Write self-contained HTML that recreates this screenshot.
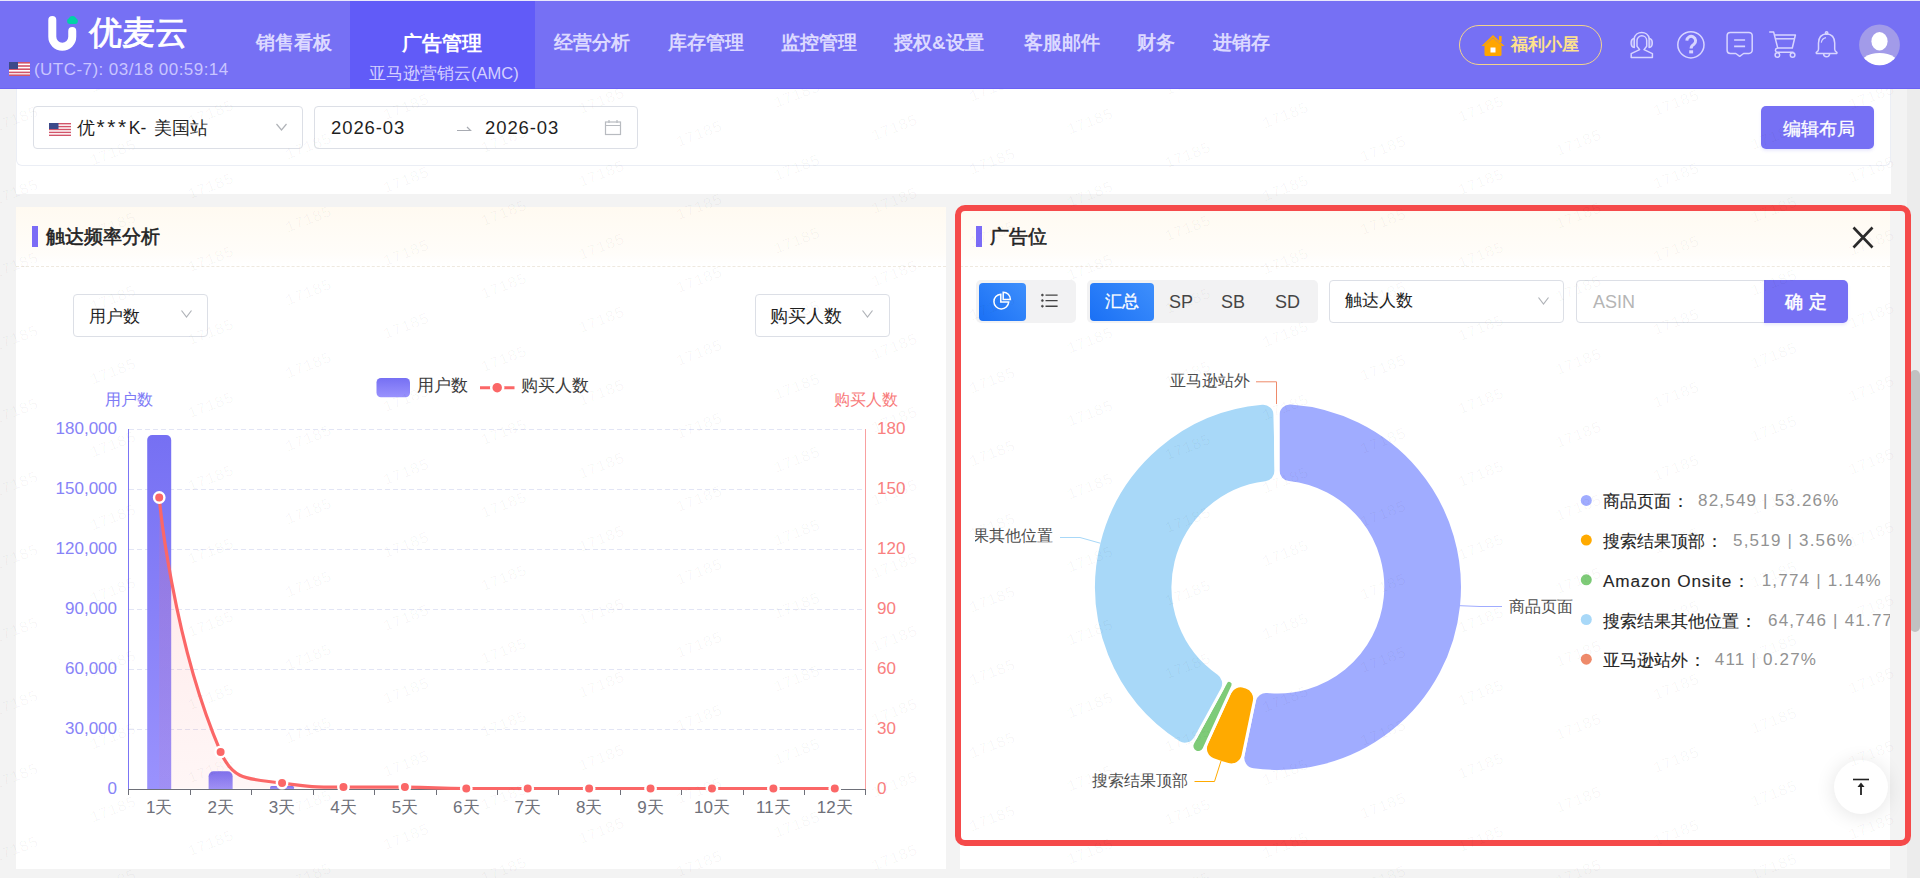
<!DOCTYPE html>
<html><head><meta charset="utf-8">
<style>
*{box-sizing:border-box;margin:0;padding:0}
html,body{width:1920px;height:878px;overflow:hidden;background:#f3f3f3;font-family:"Liberation Sans",sans-serif;color:#303133}
.a{position:absolute;white-space:nowrap}
#hdr{position:absolute;left:0;top:1px;width:1920px;height:88px;background:#7670f4;border-bottom:1px solid #6a62f4}
#topline{position:absolute;left:0;top:0;width:1920px;height:1px;background:#e9e8fb}
.nav{position:absolute;top:30px;font-size:18.8px;font-weight:bold;color:#dcd9ff;line-height:24px}
.ico{position:absolute}
</style></head><body>
<div id="topline"></div>
<div id="hdr">
  <!-- logo -->
  <svg class="ico" style="left:40px;top:8px" width="44" height="46" viewBox="40 8 44 46">
    <path d="M52.3 19 V35.8 A9.97 9.97 0 0 0 72.25 35.8 V30" fill="none" stroke="#fff" stroke-width="8" stroke-linecap="round"/>
    <circle cx="72.5" cy="18.6" r="3.6" fill="#00d2a6"/><rect x="67.1" y="17.2" width="10.8" height="5.8" rx="2.9" fill="#00d2a6"/>
  </svg>
  <div class="a" style="left:89px;top:12px;font-size:33px;color:#fff;-webkit-text-stroke:0.9px #fff;line-height:40px">优麦云</div>
  <svg class="ico" style="left:9px;top:61px" width="21" height="14" viewBox="0 0 21 14">
    <rect width="21" height="14" fill="#fff"/>
    <g fill="#d2556a"><rect y="0" width="21" height="1.6"/><rect y="3.2" width="21" height="1.6"/><rect y="6.4" width="21" height="1.6"/><rect y="9.6" width="21" height="1.6"/><rect y="12.4" width="21" height="1.6"/></g>
    <rect width="9" height="7" fill="#3c4a8a"/>
  </svg>
  <div class="a" style="left:34px;top:59px;font-size:17px;letter-spacing:0.45px;color:#c9c5ff;line-height:20px">(UTC-7): 03/18 00:59:14</div>

  <div class="nav" style="left:256px">销售看板</div>
  <div class="a" style="left:350px;top:0px;width:185px;height:88px;background:#615bf8"></div>
  <div class="a" style="left:402px;top:29px;font-size:20px;font-weight:bold;color:#fff;line-height:26px">广告管理</div>
  <div class="a" style="left:369px;top:62px;font-size:16.5px;color:#d4d0ff;line-height:20px">亚马逊营销云(AMC)</div>
  <div class="nav" style="left:554px">经营分析</div>
  <div class="nav" style="left:668px">库存管理</div>
  <div class="nav" style="left:781px">监控管理</div>
  <div class="nav" style="left:894px">授权&amp;设置</div>
  <div class="nav" style="left:1024px">客服邮件</div>
  <div class="nav" style="left:1137px">财务</div>
  <div class="nav" style="left:1213px">进销存</div>

  <!-- welfare pill -->
  <div class="a" style="left:1459px;top:24px;width:143px;height:40px;border:1.5px solid #f3d38c;border-radius:20px"></div>
  <svg class="ico" style="left:1480px;top:32px" width="26" height="24" viewBox="0 0 26 24">
    <path d="M13 2 L1.5 13 L4 13 L13 4.5 L22 13 L24.5 13 Z" fill="#ffa500"/>
    <rect x="19" y="3" width="2.6" height="6" fill="#ffa500"/>
    <path d="M4.5 12.5 L13 5 L21.5 12.5 V21.5 A1.5 1.5 0 0 1 20 23 H6 A1.5 1.5 0 0 1 4.5 21.5 Z" fill="#ffa500"/>
    <rect x="10.5" y="14.5" width="5" height="5" fill="#fff"/>
  </svg>
  <div class="a" style="left:1511px;top:31.5px;font-size:17px;font-weight:bold;color:#ffe28c;line-height:24px">福利小屋</div>

  <!-- icons -->
  <svg class="ico" style="left:1620px;top:19px" width="290" height="50" viewBox="1620 20 290 50" fill="none" stroke="#d8d5ff" stroke-width="1.5" stroke-linejoin="round">
    <path d="M1634.1 38.5 A7.8 7.8 0 0 1 1649.3 38.5"/>
    <path d="M1634.3 38.6 C1632 38.8 1631.1 41 1631.1 43 C1631.1 45.3 1632 47.3 1634.3 47.4 Z" fill="#d8d5ff" fill-opacity="0.35"/>
    <path d="M1649.1 38.6 C1651.4 38.8 1652.3 41 1652.3 43 C1652.3 45.3 1651.4 47.3 1649.1 47.4 Z" fill="#d8d5ff" fill-opacity="0.35"/>
    <path d="M1639.6 49.6 L1637 46.2 V40.6 A4.85 4.85 0 0 1 1646.7 40.6 V46.2 L1644 49.6 L1652.4 53.6 V57.4 H1631.2 V53.6 Z"/>
    <circle cx="1690.9" cy="44.8" r="13.1"/>
    <path d="M1686.8 40.6 A4.4 4.4 0 1 1 1693.9 44.2 C1692 45.3 1691.1 46.1 1691.1 48.6" stroke-width="3"/>
    <rect x="1689.2" y="50.3" width="3.9" height="3.1" fill="#d8d5ff" stroke="none"/>
    <path d="M1730.3 32.4 H1749 A3.2 3.2 0 0 1 1752.2 35.6 V50.3 A3.2 3.2 0 0 1 1749 53.5 H1743.6 L1739.7 56.3 L1735.8 53.5 H1730.3 A3.2 3.2 0 0 1 1727.1 50.3 V35.6 A3.2 3.2 0 0 1 1730.3 32.4 Z"/>
    <path d="M1734.1 40 H1745.1 M1734.1 46.3 H1745.1" stroke-width="1.7"/>
    <path d="M1769.2 31.9 H1773.6 L1777.7 47.9 Q1775.2 48.5 1775.4 50.5 Q1775.6 52.3 1777.6 52.3 H1793.5"/>
    <path d="M1774.5 35 H1795.4 L1792.3 48 H1777.6"/>
    <path d="M1775.3 38.8 H1794.5"/>
    <circle cx="1777.4" cy="55" r="2.3"/><circle cx="1792.6" cy="55" r="2.3"/>
    <path d="M1826.6 33.8 C1820.6 34.3 1818.6 38.5 1818.5 43 V49.3 C1818.5 50.8 1817.6 51.6 1816.6 52.2 C1815.8 52.7 1816.3 53.6 1817.2 53.6 H1836 C1836.9 53.6 1837.4 52.7 1836.6 52.2 C1835.6 51.6 1834.7 50.8 1834.7 49.3 V43 C1834.6 38.5 1832.6 34.3 1826.6 33.8 Z"/>
    <circle cx="1826.6" cy="33" r="1.2"/>
    <path d="M1823.6 53.8 A3 3 0 0 0 1829.6 53.8"/>
    <path d="M1821.3 42.6 A5.8 5.8 0 0 1 1826 37.6" stroke-width="1.2"/>
  </svg>
  <svg class="ico" style="left:1858px;top:23px" width="43" height="43" viewBox="1858 23 43 43">
    <defs><clipPath id="avc"><circle cx="1879.5" cy="43.9" r="20.4"/></clipPath></defs>
    <circle cx="1879.5" cy="43.9" r="20.4" fill="#a29be9"/>
    <g clip-path="url(#avc)">
      <ellipse cx="1879.5" cy="40.3" rx="8.1" ry="9.2" fill="#fff"/>
      <ellipse cx="1879.5" cy="66.4" rx="21" ry="14.4" fill="#fff"/>
    </g>
  </svg>
</div>

<!-- top filter container -->
<div class="a" style="left:16px;top:89px;width:1875px;height:105px;background:#fff"></div>
<div class="a" style="left:16px;top:89px;width:1875px;height:77px;border:1px solid #ebeef5;border-top:none;border-radius:0 0 6px 6px;background:#fff"></div>
<div class="a" style="left:33px;top:106px;width:270px;height:43px;border:1px solid #dcdfe6;border-radius:4px;background:#fff"></div>
<svg class="ico" style="left:49px;top:123px" width="22" height="13" viewBox="0 0 22 13">
  <rect width="22" height="13" fill="#fff"/>
  <g fill="#d2556a"><rect y="0" width="22" height="1.4"/><rect y="2.9" width="22" height="1.4"/><rect y="5.8" width="22" height="1.4"/><rect y="8.7" width="22" height="1.4"/><rect y="11.6" width="22" height="1.4"/></g>
  <rect width="9.5" height="6" fill="#3c4a8a"/>
</svg>
<div class="a" style="left:77px;top:116px;font-size:17.5px;color:#1f1f1f;line-height:22px">优<span style="font-size:21px;letter-spacing:2.6px;margin-left:1.5px;position:relative;top:0px">***</span>K-<span style="letter-spacing:3px"> </span>美国站</div>
<svg class="ico" style="left:275px;top:122px" width="13" height="10" viewBox="0 0 13 10"><path d="M1.5 2 L6.5 8 L11.5 2" fill="none" stroke="#b0b3b8" stroke-width="1.2"/></svg>

<div class="a" style="left:314px;top:106px;width:324px;height:43px;border:1px solid #dcdfe6;border-radius:4px;background:#fff"></div>
<div class="a" style="left:331px;top:117px;font-size:18.5px;letter-spacing:0.9px;color:#1f1f1f;line-height:22px">2026-03</div>
<svg class="ico" style="left:456px;top:124px" width="16" height="8" viewBox="0 0 16 8"><path d="M1 6.5 H14.5 L11 3" fill="none" stroke="#a8abb2" stroke-width="1.2"/></svg>
<div class="a" style="left:485px;top:117px;font-size:18.5px;letter-spacing:0.9px;color:#1f1f1f;line-height:22px">2026-03</div>
<svg class="ico" style="left:604px;top:119px" width="18" height="17" viewBox="0 0 18 17" fill="none" stroke="#b8bbc0" stroke-width="1.2">
  <rect x="1.5" y="3" width="15" height="12.5"/><path d="M1.5 6.5 H16.5 M5 1 V4 M13 1 V4"/>
</svg>

<div class="a" style="left:1761px;top:106px;width:113px;height:43px;background:#7670f4;border-radius:5px;box-shadow:0 2px 3px rgba(118,112,244,0.15)"></div>
<div class="a" style="left:1783px;top:117.5px;font-size:17.5px;color:#fff;-webkit-text-stroke:0.3px #fff;line-height:22px">编辑布局</div>

<!-- LEFT PANEL -->
<div class="a" style="left:16px;top:207px;width:930px;height:662px;background:#fff"></div>
<div class="a" style="left:16px;top:207px;width:930px;height:59px;background:linear-gradient(#fffaf1,#fffdf9 80%,#fff)"></div>
<div class="a" style="left:16px;top:266px;width:930px;height:0;border-top:1px dashed #efe9df"></div>
<div class="a" style="left:32px;top:226px;width:6px;height:21px;background:#7b6cf6"></div>
<div class="a" style="left:46px;top:225px;font-size:18.7px;color:#222;-webkit-text-stroke:0.55px #222;line-height:24px">触达频率分析</div>

<div class="a" style="left:73px;top:294px;width:135px;height:43px;border:1px solid #dcdfe6;border-radius:4px;background:#fff"></div>
<div class="a" style="left:89px;top:305px;font-size:17.3px;color:#1f1f1f;line-height:22px">用户数</div>
<svg class="ico" style="left:180px;top:309px" width="13" height="10" viewBox="0 0 13 10"><path d="M1.5 1.5 L6.5 8 L11.5 1.5" fill="none" stroke="#b0b3b8" stroke-width="1.2"/></svg>

<div class="a" style="left:755px;top:294px;width:135px;height:43px;border:1px solid #dcdfe6;border-radius:4px;background:#fff"></div>
<div class="a" style="left:770px;top:305px;font-size:17.5px;color:#1f1f1f;line-height:22px">购买人数</div>
<svg class="ico" style="left:861px;top:309px" width="13" height="10" viewBox="0 0 13 10"><path d="M1.5 1.5 L6.5 8 L11.5 1.5" fill="none" stroke="#b0b3b8" stroke-width="1.2"/></svg>

<!-- CHART LEFT -->
<!--CL--><svg class="ico" style="left:16px;top:207px" width="930" height="662" viewBox="16 207 930 662">
<defs><linearGradient id="bg1" x1="0" y1="0" x2="0" y2="1"><stop offset="0" stop-color="#7670f3"/><stop offset="1" stop-color="#9a92fd"/></linearGradient><linearGradient id="ag1" x1="0" y1="0" x2="0" y2="1"><stop offset="0" stop-color="#ff6b6b" stop-opacity="0.16"/><stop offset="1" stop-color="#ff6b6b" stop-opacity="0.06"/></linearGradient><linearGradient id="lg1" x1="0" y1="0" x2="1" y2="1"><stop offset="0" stop-color="#7670f3"/><stop offset="1" stop-color="#9a92fd"/></linearGradient></defs>
<line x1="129" y1="429.5" x2="865" y2="429.5" stroke="#e2e5f5" stroke-width="1" stroke-dasharray="5 3"/>
<line x1="129" y1="489.5" x2="865" y2="489.5" stroke="#e2e5f5" stroke-width="1" stroke-dasharray="5 3"/>
<line x1="129" y1="549.5" x2="865" y2="549.5" stroke="#e2e5f5" stroke-width="1" stroke-dasharray="5 3"/>
<line x1="129" y1="609.5" x2="865" y2="609.5" stroke="#e2e5f5" stroke-width="1" stroke-dasharray="5 3"/>
<line x1="129" y1="669.5" x2="865" y2="669.5" stroke="#e2e5f5" stroke-width="1" stroke-dasharray="5 3"/>
<line x1="129" y1="729.5" x2="865" y2="729.5" stroke="#e2e5f5" stroke-width="1" stroke-dasharray="5 3"/>
<path d="M147.21 789.00 V440.00 A5.00 5.00 0 0 1 152.21 435.00 H166.21 A5.00 5.00 0 0 1 171.21 440.00 V789.00 Z" fill="url(#bg1)"/>
<path d="M208.62 789.00 V776.30 A5.00 5.00 0 0 1 213.62 771.30 H227.62 A5.00 5.00 0 0 1 232.62 776.30 V789.00 Z" fill="url(#bg1)"/>
<path d="M270.04 789.00 V787.50 A1.50 1.50 0 0 1 271.54 786.00 H292.54 A1.50 1.50 0 0 1 294.04 787.50 V789.00 Z" fill="url(#bg1)"/>
<path d="M159.21 497.50 C159.21 497.50 172.01 638.86 220.62 751.90 C233.42 781.66 249.61 778.62 282.04 783.10 C311.02 787.10 312.72 787.10 343.46 787.10 C374.13 787.10 374.17 787.10 404.88 787.10 C435.59 787.10 435.58 788.50 466.29 788.50 C497.00 788.50 497.00 788.50 527.71 788.50 C558.42 788.50 558.42 788.50 589.12 788.50 C619.83 788.50 619.83 788.50 650.54 788.50 C681.25 788.50 681.25 788.50 711.96 788.50 C742.67 788.50 742.67 788.50 773.38 788.50 C804.08 788.50 834.79 788.50 834.79 788.50 L834.79 788.50 L159.21 788.50 Z" fill="url(#ag1)"/>
<line x1="128.5" y1="429" x2="128.5" y2="789" stroke="#7b75f5" stroke-width="1"/>
<line x1="865.5" y1="429" x2="865.5" y2="789" stroke="#f8a0a0" stroke-width="1"/>
<line x1="128" y1="789.5" x2="866" y2="789.5" stroke="#6e7079" stroke-width="1"/>
<line x1="128.5" y1="789" x2="128.5" y2="795" stroke="#6e7079" stroke-width="1"/>
<line x1="190.5" y1="789" x2="190.5" y2="795" stroke="#6e7079" stroke-width="1"/>
<line x1="251.5" y1="789" x2="251.5" y2="795" stroke="#6e7079" stroke-width="1"/>
<line x1="313.5" y1="789" x2="313.5" y2="795" stroke="#6e7079" stroke-width="1"/>
<line x1="374.5" y1="789" x2="374.5" y2="795" stroke="#6e7079" stroke-width="1"/>
<line x1="436.5" y1="789" x2="436.5" y2="795" stroke="#6e7079" stroke-width="1"/>
<line x1="497.5" y1="789" x2="497.5" y2="795" stroke="#6e7079" stroke-width="1"/>
<line x1="558.5" y1="789" x2="558.5" y2="795" stroke="#6e7079" stroke-width="1"/>
<line x1="620.5" y1="789" x2="620.5" y2="795" stroke="#6e7079" stroke-width="1"/>
<line x1="681.5" y1="789" x2="681.5" y2="795" stroke="#6e7079" stroke-width="1"/>
<line x1="743.5" y1="789" x2="743.5" y2="795" stroke="#6e7079" stroke-width="1"/>
<line x1="804.5" y1="789" x2="804.5" y2="795" stroke="#6e7079" stroke-width="1"/>
<line x1="865.5" y1="789" x2="865.5" y2="795" stroke="#6e7079" stroke-width="1"/>
<path d="M159.21 497.50 C159.21 497.50 172.01 638.86 220.62 751.90 C233.42 781.66 249.61 778.62 282.04 783.10 C311.02 787.10 312.72 787.10 343.46 787.10 C374.13 787.10 374.17 787.10 404.88 787.10 C435.59 787.10 435.58 788.50 466.29 788.50 C497.00 788.50 497.00 788.50 527.71 788.50 C558.42 788.50 558.42 788.50 589.12 788.50 C619.83 788.50 619.83 788.50 650.54 788.50 C681.25 788.50 681.25 788.50 711.96 788.50 C742.67 788.50 742.67 788.50 773.38 788.50 C804.08 788.50 834.79 788.50 834.79 788.50" fill="none" stroke="#fb6767" stroke-width="3.2"/>
<circle cx="159.21" cy="497.50" r="5.2" fill="#fb6767" stroke="#fff" stroke-width="2.4"/>
<circle cx="220.62" cy="751.90" r="5.2" fill="#fb6767" stroke="#fff" stroke-width="2.4"/>
<circle cx="282.04" cy="783.10" r="5.2" fill="#fb6767" stroke="#fff" stroke-width="2.4"/>
<circle cx="343.46" cy="787.10" r="5.2" fill="#fb6767" stroke="#fff" stroke-width="2.4"/>
<circle cx="404.88" cy="787.10" r="5.2" fill="#fb6767" stroke="#fff" stroke-width="2.4"/>
<circle cx="466.29" cy="788.50" r="5.2" fill="#fb6767" stroke="#fff" stroke-width="2.4"/>
<circle cx="527.71" cy="788.50" r="5.2" fill="#fb6767" stroke="#fff" stroke-width="2.4"/>
<circle cx="589.12" cy="788.50" r="5.2" fill="#fb6767" stroke="#fff" stroke-width="2.4"/>
<circle cx="650.54" cy="788.50" r="5.2" fill="#fb6767" stroke="#fff" stroke-width="2.4"/>
<circle cx="711.96" cy="788.50" r="5.2" fill="#fb6767" stroke="#fff" stroke-width="2.4"/>
<circle cx="773.38" cy="788.50" r="5.2" fill="#fb6767" stroke="#fff" stroke-width="2.4"/>
<circle cx="834.79" cy="788.50" r="5.2" fill="#fb6767" stroke="#fff" stroke-width="2.4"/>
<text x="117" y="433.5" text-anchor="end" font-size="17" fill="#8783f7">180,000</text>
<text x="877" y="433.5" font-size="17" fill="#f98080">180</text>
<text x="117" y="493.5" text-anchor="end" font-size="17" fill="#8783f7">150,000</text>
<text x="877" y="493.5" font-size="17" fill="#f98080">150</text>
<text x="117" y="553.5" text-anchor="end" font-size="17" fill="#8783f7">120,000</text>
<text x="877" y="553.5" font-size="17" fill="#f98080">120</text>
<text x="117" y="613.5" text-anchor="end" font-size="17" fill="#8783f7">90,000</text>
<text x="877" y="613.5" font-size="17" fill="#f98080">90</text>
<text x="117" y="673.5" text-anchor="end" font-size="17" fill="#8783f7">60,000</text>
<text x="877" y="673.5" font-size="17" fill="#f98080">60</text>
<text x="117" y="733.5" text-anchor="end" font-size="17" fill="#8783f7">30,000</text>
<text x="877" y="733.5" font-size="17" fill="#f98080">30</text>
<text x="117" y="793.5" text-anchor="end" font-size="17" fill="#8783f7">0</text>
<text x="877" y="793.5" font-size="17" fill="#f98080">0</text>
<text x="159.21" y="812.5" text-anchor="middle" font-size="17" fill="#6e7079">1天</text>
<text x="220.62" y="812.5" text-anchor="middle" font-size="17" fill="#6e7079">2天</text>
<text x="282.04" y="812.5" text-anchor="middle" font-size="17" fill="#6e7079">3天</text>
<text x="343.46" y="812.5" text-anchor="middle" font-size="17" fill="#6e7079">4天</text>
<text x="404.88" y="812.5" text-anchor="middle" font-size="17" fill="#6e7079">5天</text>
<text x="466.29" y="812.5" text-anchor="middle" font-size="17" fill="#6e7079">6天</text>
<text x="527.71" y="812.5" text-anchor="middle" font-size="17" fill="#6e7079">7天</text>
<text x="589.12" y="812.5" text-anchor="middle" font-size="17" fill="#6e7079">8天</text>
<text x="650.54" y="812.5" text-anchor="middle" font-size="17" fill="#6e7079">9天</text>
<text x="711.96" y="812.5" text-anchor="middle" font-size="17" fill="#6e7079">10天</text>
<text x="773.38" y="812.5" text-anchor="middle" font-size="17" fill="#6e7079">11天</text>
<text x="834.79" y="812.5" text-anchor="middle" font-size="17" fill="#6e7079">12天</text>
<text x="129" y="405" text-anchor="middle" font-size="16" fill="#7d7af6">用户数</text>
<text x="866" y="405" text-anchor="middle" font-size="16" fill="#f87a7a">购买人数</text>
<rect x="376.5" y="378" width="33.5" height="19.3" rx="4.5" fill="url(#bg1)"/>
<text x="417" y="391" font-size="16.5" fill="#3c3c3c">用户数</text>
<line x1="480" y1="387.7" x2="514.5" y2="387.7" stroke="#fb6767" stroke-width="3"/>
<circle cx="497.2" cy="387.7" r="6" fill="#fb6767" stroke="#fff" stroke-width="2.5"/>
<text x="521" y="391" font-size="16.5" fill="#3c3c3c">购买人数</text>
</svg><!--/CL-->

<!-- RIGHT PANEL -->
<div class="a" style="left:960px;top:207px;width:930px;height:662px;background:#fff"></div>
<div class="a" style="left:960px;top:207px;width:930px;height:59px;background:linear-gradient(#fffaf1,#fffdf9 80%,#fff)"></div>
<div class="a" style="left:960px;top:266px;width:930px;height:0;border-top:1px dashed #efe9df"></div>
<div class="a" style="left:976px;top:226px;width:6px;height:21px;background:#7b6cf6"></div>
<div class="a" style="left:990px;top:225px;font-size:18.7px;color:#222;-webkit-text-stroke:0.55px #222;line-height:24px">广告位</div>

<!--CR--><svg class="ico" style="left:975px;top:330px" width="915" height="520" viewBox="975 330 915 520">
<path d="M1278.00 470.62 L1278.00 415.02 A12.00 12.00 0 0 1 1290.84 403.05 A184.40 184.40 0 1 1 1253.18 769.72 A12.00 12.00 0 0 1 1243.04 755.39 L1254.34 700.95 A12.00 12.00 0 0 1 1267.31 691.45 A105.00 105.00 0 0 0 1288.77 482.55 A12.00 12.00 0 0 1 1278.00 470.62 Z" fill="#a0acff" stroke="#fff" stroke-width="3"/>
<path d="M1254.34 700.95 L1243.04 755.39 A12.00 12.00 0 0 1 1228.04 764.50 A184.40 184.40 0 0 1 1213.26 759.66 A12.00 12.00 0 0 1 1206.55 743.44 L1229.65 692.86 A12.00 12.00 0 0 1 1244.41 686.48 A105.00 105.00 0 0 0 1246.23 687.08 A12.00 12.00 0 0 1 1254.34 700.95 Z" fill="#ffaa00" stroke="#fff" stroke-width="3"/>
<path d="M1232.78 686.01 L1204.10 748.81 A6.40 6.40 0 0 1 1195.41 751.87 A184.40 184.40 0 0 1 1195.41 751.87 A6.40 6.40 0 0 1 1192.67 743.08 L1225.79 682.50 A3.92 3.92 0 0 1 1230.97 680.88 A105.00 105.00 0 0 0 1230.97 680.88 A3.92 3.92 0 0 1 1232.78 686.01 Z" fill="#7ecb78" stroke="#fff" stroke-width="3"/>
<path d="M1222.17 689.12 L1195.50 737.90 A12.00 12.00 0 0 1 1178.49 742.25 A184.40 184.40 0 0 1 1262.10 403.29 A12.00 12.00 0 0 1 1275.13 415.04 L1276.06 470.63 A12.00 12.00 0 0 1 1265.49 482.75 A105.00 105.00 0 0 0 1218.45 673.48 A12.00 12.00 0 0 1 1222.17 689.12 Z" fill="#a8d8f8" stroke="#fff" stroke-width="3"/>
<path d="M1276.24 481.14 L1274.95 404.16 A1.52 1.52 0 0 1 1276.46 402.61 A184.40 184.40 0 0 1 1276.46 402.61 A1.52 1.52 0 0 1 1278.00 404.13 L1278.00 481.12 A0.88 0.88 0 0 1 1277.13 482.00 A105.00 105.00 0 0 0 1277.13 482.00 A0.88 0.88 0 0 1 1276.24 481.14 Z" fill="#ee8a6a" stroke="#fff" stroke-width="3"/>
<polyline points="1460,605.7 1480,606.5 1502,606.5" fill="none" stroke="#a0acff" stroke-width="1"/>
<polyline points="1221,761 1214.5,781.5 1194.5,781.5" fill="none" stroke="#ffaa00" stroke-width="1"/>
<polyline points="1100.3,543.2 1080,537.5 1060,537.5" fill="none" stroke="#a8d8f8" stroke-width="1"/>
<polyline points="1276.5,404 1276.5,381.8 1256,381.8" fill="none" stroke="#ee8a6a" stroke-width="1"/>
<text x="1509" y="611.5" font-size="16" fill="#4e4e4e">商品页面</text>
<text x="1188" y="785.5" text-anchor="end" font-size="16" fill="#4e4e4e">搜索结果顶部</text>
<text x="1052.5" y="541" text-anchor="end" font-size="16" fill="#4e4e4e">搜索结果其他位置</text>
<text x="1249.5" y="385.5" text-anchor="end" font-size="16" fill="#4e4e4e">亚马逊站外</text>
<circle cx="1586.3" cy="500.4" r="5.5" fill="#a0acff"/>
<text x="1603" y="507.4" font-size="17.2" fill="#262626" stroke="#262626" stroke-width="0.12">商品页面<tspan dx="0.5">：</tspan></text>
<text x="1698.0" y="506.4" font-size="17" fill="#929292" letter-spacing="1.2">82,549 | 53.26%</text>
<circle cx="1586.3" cy="540.1" r="5.5" fill="#ffaa00"/>
<text x="1603" y="547.1" font-size="17.2" fill="#262626" stroke="#262626" stroke-width="0.12">搜索结果顶部<tspan dx="0.5">：</tspan></text>
<text x="1733.0" y="546.1" font-size="17" fill="#929292" letter-spacing="1.2">5,519 | 3.56%</text>
<circle cx="1586.3" cy="579.8" r="5.5" fill="#7ecb78"/>
<text x="1603" y="586.8" font-size="17.2" fill="#262626" stroke="#262626" stroke-width="0.12" letter-spacing="0.9">Amazon Onsite<tspan dx="0.5">：</tspan></text>
<text x="1761.7" y="585.8" font-size="17" fill="#929292" letter-spacing="1.2">1,774 | 1.14%</text>
<circle cx="1586.3" cy="619.5" r="5.5" fill="#a8d8f8"/>
<text x="1603" y="626.5" font-size="17.2" fill="#262626" stroke="#262626" stroke-width="0.12">搜索结果其他位置<tspan dx="0.5">：</tspan></text>
<text x="1768.0" y="625.5" font-size="17" fill="#929292" letter-spacing="1.2">64,746 | 41.77%</text>
<circle cx="1586.3" cy="659.2" r="5.5" fill="#ee8a6a"/>
<text x="1603" y="666.2" font-size="17.2" fill="#262626" stroke="#262626" stroke-width="0.12">亚马逊站外<tspan dx="0.5">：</tspan></text>
<text x="1714.8" y="665.2" font-size="17" fill="#929292" letter-spacing="1.2">411 | 0.27%</text>
</svg><!--/CR-->

<!-- right toolbar -->
<svg class="ico" style="left:1852px;top:226px" width="22" height="23" viewBox="0 0 22 23"><path d="M1.5 1.5 L20.5 21.5 M20.5 1.5 L1.5 21.5" stroke="#2b2b2b" stroke-width="2.6"/></svg>
<div class="a" style="left:976px;top:280px;width:100px;height:43px;background:#f2f2f3;border-radius:5px"></div>
<div class="a" style="left:979px;top:283px;width:47px;height:38px;background:linear-gradient(45deg,#1a70f5,#3e8ffc);border-radius:4px"></div>
<svg class="ico" style="left:985px;top:285px" width="30" height="30" viewBox="985 285 30 30" fill="none" stroke="#fff" stroke-width="1.5">
  <path d="M1000.8 294.2 A7.4 7.4 0 1 0 1008.7 302.1 H1000.8 Z"/><path d="M1003.2 292.2 A7.2 7.2 0 0 1 1010.4 299.4 H1003.2 Z"/>
</svg>
<svg class="ico" style="left:1035px;top:288px" width="30" height="24" viewBox="1035 288 30 24" fill="none" stroke="#444" stroke-width="1.4">
  <path d="M1045.5 295.1 H1057.6 M1045.5 300.6 H1057.6 M1045.5 306.2 H1057.6"/>
  <circle cx="1042.4" cy="295.1" r="1" fill="#444" stroke-width="0.6"/><circle cx="1042.4" cy="300.6" r="1" fill="#444" stroke-width="0.6"/><circle cx="1042.4" cy="306.2" r="1" fill="#444" stroke-width="0.6"/>
</svg>
<div class="a" style="left:1087px;top:280px;width:231px;height:43px;background:#f2f2f3;border-radius:5px"></div>
<div class="a" style="left:1090px;top:283px;width:64px;height:38px;background:linear-gradient(45deg,#1a70f5,#3e8ffc);border-radius:4px"></div>
<div class="a" style="left:1105px;top:290.5px;font-size:17px;color:#fff;-webkit-text-stroke:0.3px #fff;line-height:22px">汇总</div>
<div class="a" style="left:1169px;top:291px;font-size:18px;color:#454545;line-height:22px">SP</div>
<div class="a" style="left:1221px;top:291px;font-size:18px;color:#454545;line-height:22px">SB</div>
<div class="a" style="left:1275px;top:291px;font-size:18px;color:#454545;line-height:22px">SD</div>
<div class="a" style="left:1329px;top:280px;width:235px;height:43px;border:1px solid #dcdfe6;border-radius:4px;background:#fff"></div>
<div class="a" style="left:1345px;top:290px;font-size:17px;color:#1f1f1f;line-height:22px">触达人数</div>
<svg class="ico" style="left:1537px;top:296px" width="13" height="10" viewBox="0 0 13 10"><path d="M1.5 1.5 L6.5 8 L11.5 1.5" fill="none" stroke="#b0b3b8" stroke-width="1.2"/></svg>
<div class="a" style="left:1576px;top:280px;width:192px;height:43px;border:1px solid #dcdfe6;border-radius:4px 0 0 4px;background:#fff"></div>
<div class="a" style="left:1593px;top:291px;font-size:18px;color:#b5b5b5;line-height:22px">ASIN</div>
<div class="a" style="left:1764px;top:280px;width:84px;height:43px;background:#7670f4;border-radius:0 5px 5px 0;box-shadow:0 2px 3px rgba(118,112,244,0.15)"></div>
<div class="a" style="left:1785px;top:291px;font-size:17.5px;color:#fff;-webkit-text-stroke:0.5px #fff;line-height:22px;letter-spacing:6px">确定</div>

<!-- back to top -->
<div class="a" style="left:1834px;top:760px;width:54px;height:54px;border-radius:50%;background:#fff;box-shadow:0 2px 20px rgba(0,0,0,0.11)"></div>
<svg class="ico" style="left:1851px;top:777px" width="20" height="20" viewBox="0 0 20 20">
  <path d="M2 2.5 H18" stroke="#222" stroke-width="1.6"/><path d="M10 18 V8" stroke="#222" stroke-width="1.8"/><path d="M6.5 10 L10 5.5 L13.5 10 Z" fill="#222"/>
</svg>

<!-- scrollbar -->
<div class="a" style="left:1907px;top:89px;width:13px;height:789px;background:#ececec"></div>
<div class="a" style="left:1910px;top:370px;width:10px;height:262px;background:#c1c1c1;border-radius:5px"></div>

<!-- red highlight -->
<div class="a" style="left:955px;top:205px;width:956px;height:641px;border:6px solid #f54a4a;border-radius:10px"></div>









<!--WM--><svg class="ico" style="left:0;top:89px;pointer-events:none" width="1920" height="789" viewBox="0 89 1920 789"><g font-family="Liberation Mono" font-size="16" fill="#000" fill-opacity="0.035" text-anchor="middle" dominant-baseline="central"><text transform="translate(15.4 120.4) rotate(-21)">17185</text><text transform="translate(15.4 193.4) rotate(-21)">17185</text><text transform="translate(15.4 266.4) rotate(-21)">17185</text><text transform="translate(15.4 339.4) rotate(-21)">17185</text><text transform="translate(15.4 412.4) rotate(-21)">17185</text><text transform="translate(15.4 485.4) rotate(-21)">17185</text><text transform="translate(15.4 558.4) rotate(-21)">17185</text><text transform="translate(15.4 631.4) rotate(-21)">17185</text><text transform="translate(15.4 704.4) rotate(-21)">17185</text><text transform="translate(15.4 777.4) rotate(-21)">17185</text><text transform="translate(15.4 850.4) rotate(-21)">17185</text><text transform="translate(15.4 923.4) rotate(-21)">17185</text><text transform="translate(113.1 80.5) rotate(-21)">17185</text><text transform="translate(210.8 114.2) rotate(-21)">17185</text><text transform="translate(113.1 153.5) rotate(-21)">17185</text><text transform="translate(210.8 187.2) rotate(-21)">17185</text><text transform="translate(113.1 226.5) rotate(-21)">17185</text><text transform="translate(210.8 260.2) rotate(-21)">17185</text><text transform="translate(113.1 299.5) rotate(-21)">17185</text><text transform="translate(210.8 333.2) rotate(-21)">17185</text><text transform="translate(113.1 372.5) rotate(-21)">17185</text><text transform="translate(210.8 406.2) rotate(-21)">17185</text><text transform="translate(113.1 445.5) rotate(-21)">17185</text><text transform="translate(210.8 479.2) rotate(-21)">17185</text><text transform="translate(113.1 518.5) rotate(-21)">17185</text><text transform="translate(210.8 552.2) rotate(-21)">17185</text><text transform="translate(113.1 591.5) rotate(-21)">17185</text><text transform="translate(210.8 625.2) rotate(-21)">17185</text><text transform="translate(113.1 664.5) rotate(-21)">17185</text><text transform="translate(210.8 698.2) rotate(-21)">17185</text><text transform="translate(113.1 737.5) rotate(-21)">17185</text><text transform="translate(210.8 771.2) rotate(-21)">17185</text><text transform="translate(113.1 810.5) rotate(-21)">17185</text><text transform="translate(210.8 844.2) rotate(-21)">17185</text><text transform="translate(113.1 883.5) rotate(-21)">17185</text><text transform="translate(210.8 917.2) rotate(-21)">17185</text><text transform="translate(308.5 74.3) rotate(-21)">17185</text><text transform="translate(406.2 108.0) rotate(-21)">17185</text><text transform="translate(308.5 147.3) rotate(-21)">17185</text><text transform="translate(406.2 181.0) rotate(-21)">17185</text><text transform="translate(308.5 220.3) rotate(-21)">17185</text><text transform="translate(406.2 254.0) rotate(-21)">17185</text><text transform="translate(308.5 293.3) rotate(-21)">17185</text><text transform="translate(406.2 327.0) rotate(-21)">17185</text><text transform="translate(308.5 366.3) rotate(-21)">17185</text><text transform="translate(406.2 400.0) rotate(-21)">17185</text><text transform="translate(308.5 439.3) rotate(-21)">17185</text><text transform="translate(406.2 473.0) rotate(-21)">17185</text><text transform="translate(308.5 512.3) rotate(-21)">17185</text><text transform="translate(406.2 546.0) rotate(-21)">17185</text><text transform="translate(308.5 585.3) rotate(-21)">17185</text><text transform="translate(406.2 619.0) rotate(-21)">17185</text><text transform="translate(308.5 658.3) rotate(-21)">17185</text><text transform="translate(406.2 692.0) rotate(-21)">17185</text><text transform="translate(308.5 731.3) rotate(-21)">17185</text><text transform="translate(406.2 765.0) rotate(-21)">17185</text><text transform="translate(308.5 804.3) rotate(-21)">17185</text><text transform="translate(406.2 838.0) rotate(-21)">17185</text><text transform="translate(308.5 877.3) rotate(-21)">17185</text><text transform="translate(406.2 911.0) rotate(-21)">17185</text><text transform="translate(503.9 68.1) rotate(-21)">17185</text><text transform="translate(601.6 101.8) rotate(-21)">17185</text><text transform="translate(503.9 141.1) rotate(-21)">17185</text><text transform="translate(601.6 174.8) rotate(-21)">17185</text><text transform="translate(503.9 214.1) rotate(-21)">17185</text><text transform="translate(601.6 247.8) rotate(-21)">17185</text><text transform="translate(503.9 287.1) rotate(-21)">17185</text><text transform="translate(601.6 320.8) rotate(-21)">17185</text><text transform="translate(503.9 360.1) rotate(-21)">17185</text><text transform="translate(601.6 393.8) rotate(-21)">17185</text><text transform="translate(503.9 433.1) rotate(-21)">17185</text><text transform="translate(601.6 466.8) rotate(-21)">17185</text><text transform="translate(503.9 506.1) rotate(-21)">17185</text><text transform="translate(601.6 539.8) rotate(-21)">17185</text><text transform="translate(503.9 579.1) rotate(-21)">17185</text><text transform="translate(601.6 612.8) rotate(-21)">17185</text><text transform="translate(503.9 652.1) rotate(-21)">17185</text><text transform="translate(601.6 685.8) rotate(-21)">17185</text><text transform="translate(503.9 725.1) rotate(-21)">17185</text><text transform="translate(601.6 758.8) rotate(-21)">17185</text><text transform="translate(503.9 798.1) rotate(-21)">17185</text><text transform="translate(601.6 831.8) rotate(-21)">17185</text><text transform="translate(503.9 871.1) rotate(-21)">17185</text><text transform="translate(601.6 904.8) rotate(-21)">17185</text><text transform="translate(699.3 61.9) rotate(-21)">17185</text><text transform="translate(797.0 95.6) rotate(-21)">17185</text><text transform="translate(699.3 134.9) rotate(-21)">17185</text><text transform="translate(797.0 168.6) rotate(-21)">17185</text><text transform="translate(699.3 207.9) rotate(-21)">17185</text><text transform="translate(797.0 241.6) rotate(-21)">17185</text><text transform="translate(699.3 280.9) rotate(-21)">17185</text><text transform="translate(797.0 314.6) rotate(-21)">17185</text><text transform="translate(699.3 353.9) rotate(-21)">17185</text><text transform="translate(797.0 387.6) rotate(-21)">17185</text><text transform="translate(699.3 426.9) rotate(-21)">17185</text><text transform="translate(797.0 460.6) rotate(-21)">17185</text><text transform="translate(699.3 499.9) rotate(-21)">17185</text><text transform="translate(797.0 533.6) rotate(-21)">17185</text><text transform="translate(699.3 572.9) rotate(-21)">17185</text><text transform="translate(797.0 606.6) rotate(-21)">17185</text><text transform="translate(699.3 645.9) rotate(-21)">17185</text><text transform="translate(797.0 679.6) rotate(-21)">17185</text><text transform="translate(699.3 718.9) rotate(-21)">17185</text><text transform="translate(797.0 752.6) rotate(-21)">17185</text><text transform="translate(699.3 791.9) rotate(-21)">17185</text><text transform="translate(797.0 825.6) rotate(-21)">17185</text><text transform="translate(699.3 864.9) rotate(-21)">17185</text><text transform="translate(797.0 898.6) rotate(-21)">17185</text><text transform="translate(992.4 89.4) rotate(-21)">17185</text><text transform="translate(894.7 128.7) rotate(-21)">17185</text><text transform="translate(992.4 162.4) rotate(-21)">17185</text><text transform="translate(894.7 201.7) rotate(-21)">17185</text><text transform="translate(992.4 235.4) rotate(-21)">17185</text><text transform="translate(894.7 274.7) rotate(-21)">17185</text><text transform="translate(992.4 308.4) rotate(-21)">17185</text><text transform="translate(894.7 347.7) rotate(-21)">17185</text><text transform="translate(992.4 381.4) rotate(-21)">17185</text><text transform="translate(894.7 420.7) rotate(-21)">17185</text><text transform="translate(992.4 454.4) rotate(-21)">17185</text><text transform="translate(894.7 493.7) rotate(-21)">17185</text><text transform="translate(992.4 527.4) rotate(-21)">17185</text><text transform="translate(894.7 566.7) rotate(-21)">17185</text><text transform="translate(992.4 600.4) rotate(-21)">17185</text><text transform="translate(894.7 639.7) rotate(-21)">17185</text><text transform="translate(992.4 673.4) rotate(-21)">17185</text><text transform="translate(894.7 712.7) rotate(-21)">17185</text><text transform="translate(992.4 746.4) rotate(-21)">17185</text><text transform="translate(894.7 785.7) rotate(-21)">17185</text><text transform="translate(992.4 819.4) rotate(-21)">17185</text><text transform="translate(894.7 858.7) rotate(-21)">17185</text><text transform="translate(992.4 892.4) rotate(-21)">17185</text><text transform="translate(1187.8 83.2) rotate(-21)">17185</text><text transform="translate(1090.1 122.5) rotate(-21)">17185</text><text transform="translate(1187.8 156.2) rotate(-21)">17185</text><text transform="translate(1090.1 195.5) rotate(-21)">17185</text><text transform="translate(1187.8 229.2) rotate(-21)">17185</text><text transform="translate(1090.1 268.5) rotate(-21)">17185</text><text transform="translate(1187.8 302.2) rotate(-21)">17185</text><text transform="translate(1090.1 341.5) rotate(-21)">17185</text><text transform="translate(1187.8 375.2) rotate(-21)">17185</text><text transform="translate(1090.1 414.5) rotate(-21)">17185</text><text transform="translate(1187.8 448.2) rotate(-21)">17185</text><text transform="translate(1090.1 487.5) rotate(-21)">17185</text><text transform="translate(1187.8 521.2) rotate(-21)">17185</text><text transform="translate(1090.1 560.5) rotate(-21)">17185</text><text transform="translate(1187.8 594.2) rotate(-21)">17185</text><text transform="translate(1090.1 633.5) rotate(-21)">17185</text><text transform="translate(1187.8 667.2) rotate(-21)">17185</text><text transform="translate(1090.1 706.5) rotate(-21)">17185</text><text transform="translate(1187.8 740.2) rotate(-21)">17185</text><text transform="translate(1090.1 779.5) rotate(-21)">17185</text><text transform="translate(1187.8 813.2) rotate(-21)">17185</text><text transform="translate(1090.1 852.5) rotate(-21)">17185</text><text transform="translate(1187.8 886.2) rotate(-21)">17185</text><text transform="translate(1090.1 925.5) rotate(-21)">17185</text><text transform="translate(1383.2 77.0) rotate(-21)">17185</text><text transform="translate(1285.5 116.3) rotate(-21)">17185</text><text transform="translate(1383.2 150.0) rotate(-21)">17185</text><text transform="translate(1285.5 189.3) rotate(-21)">17185</text><text transform="translate(1383.2 223.0) rotate(-21)">17185</text><text transform="translate(1285.5 262.3) rotate(-21)">17185</text><text transform="translate(1383.2 296.0) rotate(-21)">17185</text><text transform="translate(1285.5 335.3) rotate(-21)">17185</text><text transform="translate(1383.2 369.0) rotate(-21)">17185</text><text transform="translate(1285.5 408.3) rotate(-21)">17185</text><text transform="translate(1383.2 442.0) rotate(-21)">17185</text><text transform="translate(1285.5 481.3) rotate(-21)">17185</text><text transform="translate(1383.2 515.0) rotate(-21)">17185</text><text transform="translate(1285.5 554.3) rotate(-21)">17185</text><text transform="translate(1383.2 588.0) rotate(-21)">17185</text><text transform="translate(1285.5 627.3) rotate(-21)">17185</text><text transform="translate(1383.2 661.0) rotate(-21)">17185</text><text transform="translate(1285.5 700.3) rotate(-21)">17185</text><text transform="translate(1383.2 734.0) rotate(-21)">17185</text><text transform="translate(1285.5 773.3) rotate(-21)">17185</text><text transform="translate(1383.2 807.0) rotate(-21)">17185</text><text transform="translate(1285.5 846.3) rotate(-21)">17185</text><text transform="translate(1383.2 880.0) rotate(-21)">17185</text><text transform="translate(1285.5 919.3) rotate(-21)">17185</text><text transform="translate(1578.6 70.8) rotate(-21)">17185</text><text transform="translate(1480.9 110.1) rotate(-21)">17185</text><text transform="translate(1578.6 143.8) rotate(-21)">17185</text><text transform="translate(1480.9 183.1) rotate(-21)">17185</text><text transform="translate(1578.6 216.8) rotate(-21)">17185</text><text transform="translate(1480.9 256.1) rotate(-21)">17185</text><text transform="translate(1578.6 289.8) rotate(-21)">17185</text><text transform="translate(1480.9 329.1) rotate(-21)">17185</text><text transform="translate(1578.6 362.8) rotate(-21)">17185</text><text transform="translate(1480.9 402.1) rotate(-21)">17185</text><text transform="translate(1578.6 435.8) rotate(-21)">17185</text><text transform="translate(1480.9 475.1) rotate(-21)">17185</text><text transform="translate(1578.6 508.8) rotate(-21)">17185</text><text transform="translate(1480.9 548.1) rotate(-21)">17185</text><text transform="translate(1578.6 581.8) rotate(-21)">17185</text><text transform="translate(1480.9 621.1) rotate(-21)">17185</text><text transform="translate(1578.6 654.8) rotate(-21)">17185</text><text transform="translate(1480.9 694.1) rotate(-21)">17185</text><text transform="translate(1578.6 727.8) rotate(-21)">17185</text><text transform="translate(1480.9 767.1) rotate(-21)">17185</text><text transform="translate(1578.6 800.8) rotate(-21)">17185</text><text transform="translate(1480.9 840.1) rotate(-21)">17185</text><text transform="translate(1578.6 873.8) rotate(-21)">17185</text><text transform="translate(1480.9 913.1) rotate(-21)">17185</text><text transform="translate(1774.0 64.6) rotate(-21)">17185</text><text transform="translate(1676.3 103.9) rotate(-21)">17185</text><text transform="translate(1774.0 137.6) rotate(-21)">17185</text><text transform="translate(1676.3 176.9) rotate(-21)">17185</text><text transform="translate(1774.0 210.6) rotate(-21)">17185</text><text transform="translate(1676.3 249.9) rotate(-21)">17185</text><text transform="translate(1774.0 283.6) rotate(-21)">17185</text><text transform="translate(1676.3 322.9) rotate(-21)">17185</text><text transform="translate(1774.0 356.6) rotate(-21)">17185</text><text transform="translate(1676.3 395.9) rotate(-21)">17185</text><text transform="translate(1774.0 429.6) rotate(-21)">17185</text><text transform="translate(1676.3 468.9) rotate(-21)">17185</text><text transform="translate(1774.0 502.6) rotate(-21)">17185</text><text transform="translate(1676.3 541.9) rotate(-21)">17185</text><text transform="translate(1774.0 575.6) rotate(-21)">17185</text><text transform="translate(1676.3 614.9) rotate(-21)">17185</text><text transform="translate(1774.0 648.6) rotate(-21)">17185</text><text transform="translate(1676.3 687.9) rotate(-21)">17185</text><text transform="translate(1774.0 721.6) rotate(-21)">17185</text><text transform="translate(1676.3 760.9) rotate(-21)">17185</text><text transform="translate(1774.0 794.6) rotate(-21)">17185</text><text transform="translate(1676.3 833.9) rotate(-21)">17185</text><text transform="translate(1774.0 867.6) rotate(-21)">17185</text><text transform="translate(1676.3 906.9) rotate(-21)">17185</text><text transform="translate(1871.7 97.7) rotate(-21)">17185</text><text transform="translate(1969.4 131.4) rotate(-21)">17185</text><text transform="translate(1871.7 170.7) rotate(-21)">17185</text><text transform="translate(1969.4 204.4) rotate(-21)">17185</text><text transform="translate(1871.7 243.7) rotate(-21)">17185</text><text transform="translate(1969.4 277.4) rotate(-21)">17185</text><text transform="translate(1871.7 316.7) rotate(-21)">17185</text><text transform="translate(1969.4 350.4) rotate(-21)">17185</text><text transform="translate(1871.7 389.7) rotate(-21)">17185</text><text transform="translate(1969.4 423.4) rotate(-21)">17185</text><text transform="translate(1871.7 462.7) rotate(-21)">17185</text><text transform="translate(1969.4 496.4) rotate(-21)">17185</text><text transform="translate(1871.7 535.7) rotate(-21)">17185</text><text transform="translate(1969.4 569.4) rotate(-21)">17185</text><text transform="translate(1871.7 608.7) rotate(-21)">17185</text><text transform="translate(1969.4 642.4) rotate(-21)">17185</text><text transform="translate(1871.7 681.7) rotate(-21)">17185</text><text transform="translate(1969.4 715.4) rotate(-21)">17185</text><text transform="translate(1871.7 754.7) rotate(-21)">17185</text><text transform="translate(1969.4 788.4) rotate(-21)">17185</text><text transform="translate(1871.7 827.7) rotate(-21)">17185</text><text transform="translate(1969.4 861.4) rotate(-21)">17185</text><text transform="translate(1871.7 900.7) rotate(-21)">17185</text></g></svg><!--/WM-->
</body></html>
